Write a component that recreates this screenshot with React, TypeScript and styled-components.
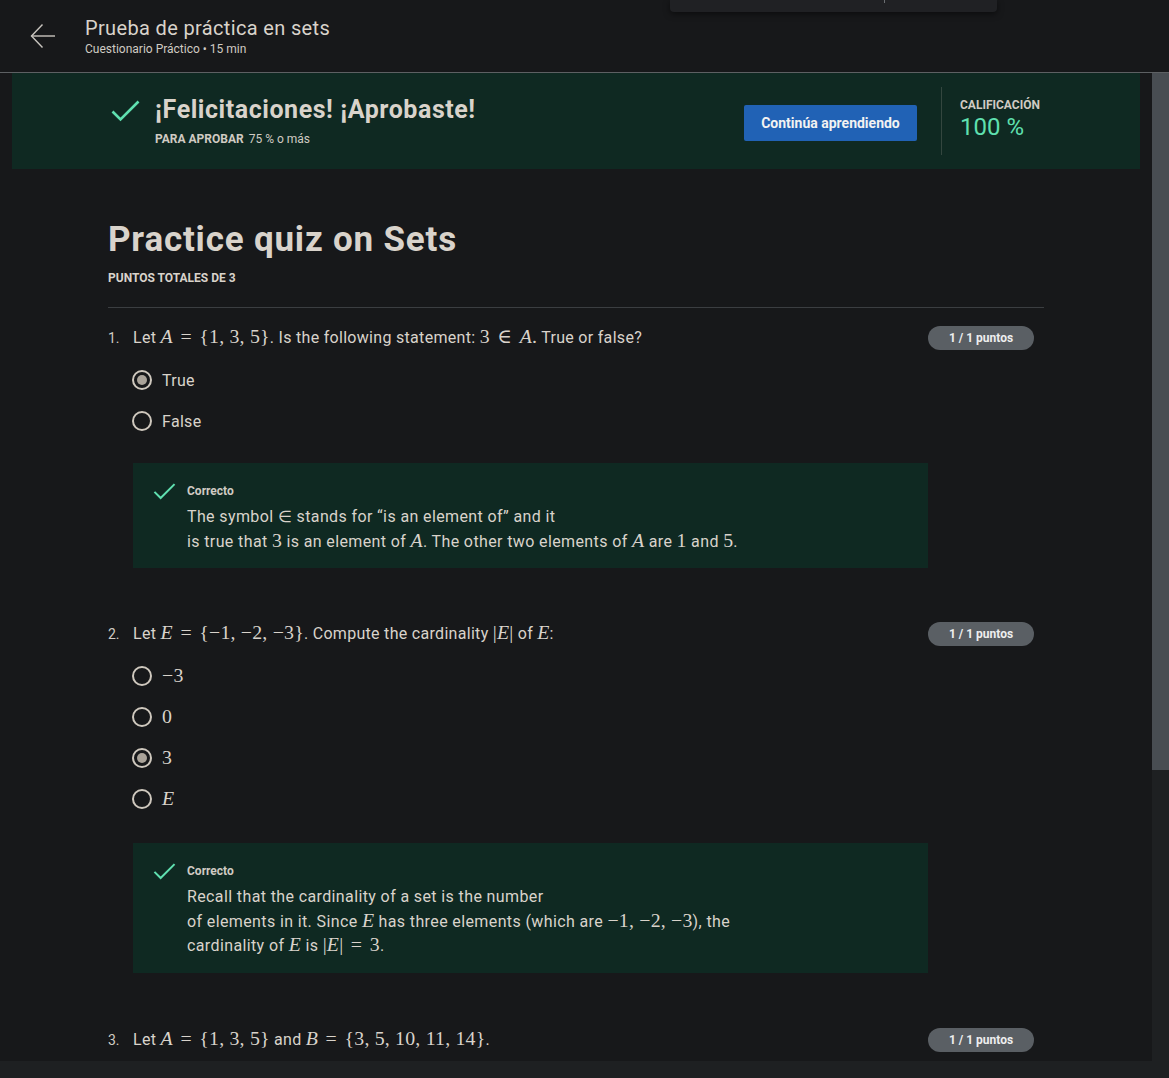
import React from "react";
import styled, { createGlobalStyle } from "styled-components";

const GlobalStyle = createGlobalStyle`
  html, body {
    margin: 0;
    padding: 0;
    background: #17181a;
    overflow: hidden;
  }
  * {
    box-sizing: border-box;
  }
`;

const TEXT = "#d9d3cb";
const GREEN = "#5fe0b0";
const DARK_GREEN = "#0f2922";

const Page = styled.div`
  position: relative;
  width: 1169px;
  height: 1078px;
  display: grid;
  grid-template-rows: 73px 1fr 17px;
  background: #17181a;
  color: ${TEXT};
  font-family: Roboto, Lato, sans-serif;
`;

// header
const Header = styled.header`
  display: flex;
  align-items: center;
  gap: 29px;
  padding-left: 30px;
  border-bottom: 1px solid #5d6063;
  background: #17181a;
`;

const BackButton = styled.button`
  display: flex;
  align-items: center;
  justify-content: center;
  width: 26px;
  height: 26px;
  padding: 0;
  border: none;
  background: transparent;
  color: #c9c5bf;
  cursor: pointer;
`;

const HeaderText = styled.div`
  display: flex;
  flex-direction: column;
`;

const HeaderTitle = styled.h1`
  margin: 0;
  font-size: 20px;
  line-height: 26px;
  font-weight: 400;
  letter-spacing: 0.35px;
  color: ${TEXT};
`;

const HeaderSub = styled.div`
  font-size: 12px;
  line-height: 16px;
  color: #d0cbc3;
`;

const TopMenu = styled.div`
  position: absolute;
  top: 0;
  left: 670px;
  width: 327px;
  height: 12px;
  background: #202124;
  border-radius: 0 0 4px 4px;
  box-shadow: 0 2px 6px rgba(0, 0, 0, 0.5);
  display: flex;
  padding-left: 214px;
`;

const MenuTick = styled.span`
  width: 1px;
  height: 3px;
  background: #6b6e72;
`;

// body and fake scrollbars
const Body = styled.div`
  display: grid;
  grid-template-columns: 1fr 17px;
  overflow: hidden;
`;

const ScrollArea = styled.main`
  overflow: hidden;
`;

const VTrack = styled.div`
  display: flex;
  flex-direction: column;
  background: #1e2022;
`;

const VThumb = styled.div`
  height: 697px;
  background: #484d52;
`;

const HTrack = styled.div`
  background: #1e2022;
`;

// banner
const Banner = styled.section`
  margin: 0 12px;
  height: 96px;
  background: ${DARK_GREEN};
  display: flex;
  align-items: center;
  padding: 0 96px 0 99px;
`;

const BannerLeft = styled.div`
  flex: 1;
  display: flex;
  align-items: flex-start;
  gap: 15px;
`;

const CheckWrap = styled.div`
  padding-top: 5px;
`;

const BannerTitle = styled.h2`
  margin: 0;
  font-size: 25px;
  line-height: 30px;
  font-weight: 700;
  letter-spacing: 0.55px;
  color: ${TEXT};
`;

const PassLine = styled.div`
  margin-top: 6px;
  font-size: 12px;
  line-height: 16px;
  color: #d0cbc3;
  b {
    font-weight: 700;
    margin-right: 5px;
  }
`;

const PrimaryButton = styled.button`
  width: 173px;
  height: 36px;
  margin-top: 4px;
  border: none;
  border-radius: 2px;
  background: #2162b5;
  color: #f2f2f2;
  font-family: inherit;
  font-size: 14px;
  font-weight: 700;
  cursor: pointer;
`;

const VDivider = styled.div`
  width: 1px;
  height: 68px;
  margin: 0 18px 0 24px;
  background: #34463f;
`;

const Grade = styled.div`
  width: 84px;
  display: flex;
  flex-direction: column;
  margin-top: -4px;
`;

const GradeLabel = styled.div`
  font-size: 12px;
  line-height: 16px;
  font-weight: 700;
  color: #d0cbc3;
  white-space: nowrap;
`;

const GradeValue = styled.div`
  font-size: 24px;
  line-height: 28px;
  color: ${GREEN};
`;

// quiz content
const Content = styled.div`
  margin-left: 108px;
  width: 936px;
`;

const QuizTitle = styled.h1`
  margin: 51px 0 0;
  font-size: 35px;
  line-height: 40px;
  font-weight: 700;
  letter-spacing: 0.8px;
  color: ${TEXT};
`;

const TotalPoints = styled.div`
  margin-top: 10px;
  font-size: 12px;
  line-height: 16px;
  font-weight: 700;
  color: ${TEXT};
`;

const Rule = styled.hr`
  margin: 21px 0 0;
  border: none;
  height: 1px;
  background: #3b3e41;
`;

const Question = styled.section<{ $gap: number }>`
  margin-top: ${(p) => p.$gap}px;
`;

const QuestionRow = styled.div`
  display: flex;
  align-items: center;
  height: 24px;
  padding-right: 10px;
`;

const QNumber = styled.span`
  width: 25px;
  font-size: 14px;
  color: #d0cbc3;
`;

const QText = styled.div`
  flex: 1;
  font-size: 16px;
  line-height: 24px;
  letter-spacing: 0.3px;
  white-space: nowrap;
`;

const Badge = styled.span`
  display: inline-flex;
  align-items: center;
  justify-content: center;
  width: 106px;
  height: 24px;
  border-radius: 12px;
  background: #5a5f64;
  color: #eeeeee;
  font-size: 12px;
  font-weight: 700;
`;

const Options = styled.div`
  margin: 18px 0 0 24px;
  display: flex;
  flex-direction: column;
  gap: 17px;
`;

const Option = styled.label`
  display: flex;
  align-items: center;
  gap: 10px;
  height: 24px;
  font-size: 16px;
  letter-spacing: 0.3px;
`;

const Radio = styled.span<{ $checked?: boolean }>`
  width: 20px;
  height: 20px;
  border-radius: 50%;
  border: 2px solid #cfc8be;
  display: flex;
  align-items: center;
  justify-content: center;
  &::after {
    content: "";
    width: 10px;
    height: 10px;
    border-radius: 50%;
    background: ${(p) => (p.$checked ? "#aaa399" : "transparent")};
  }
`;

const Feedback = styled.div<{ $gap: number }>`
  margin: ${(p) => p.$gap}px 0 0 25px;
  width: 795px;
  background: ${DARK_GREEN};
  display: flex;
  gap: 11px;
  padding: 20px 20px 14px;
`;

const FeedbackBody = styled.div`
  display: flex;
  flex-direction: column;
  gap: 6px;
`;

const FeedbackLabel = styled.div`
  font-size: 12px;
  line-height: 16px;
  font-weight: 700;
  color: #d0cbc3;
`;

const FeedbackText = styled.div`
  font-size: 16px;
  line-height: 24.5px;
  letter-spacing: 0.38px;
`;

// math
const M = styled.span`
  font-family: "Liberation Serif", "DejaVu Serif", serif;
  font-size: 1.24em;
  line-height: 1;
  letter-spacing: 0.2px;
  white-space: nowrap;
`;

const Rel = styled.span`
  margin: 0 0.12em;
`;

const I = styled.i`
  font-style: italic;
`;

const Check = ({ w, h }: { w: number; h: number }) => (
  <svg width={w} height={h} viewBox="0 0 29 22" fill="none">
    <polyline points="1.5,11.5 9.5,19.5 27.5,1.5" stroke={GREEN} strokeWidth="2.6" />
  </svg>
);

const Arrow = () => (
  <svg width="26" height="26" viewBox="0 0 26 26" fill="none" stroke="currentColor" strokeWidth="1.4">
    <path d="M25 13H1.5" />
    <path d="M12.5 1.5L1.5 13l11 11.5" />
  </svg>
);

const App = () => {
  return (
    <>
      <GlobalStyle />
      <Page>
        <Header>
          <BackButton aria-label="Volver">
            <Arrow />
          </BackButton>
          <HeaderText>
            <HeaderTitle>Prueba de práctica en sets</HeaderTitle>
            <HeaderSub>Cuestionario Práctico • 15 min</HeaderSub>
          </HeaderText>
        </Header>
        <TopMenu>
          <MenuTick />
        </TopMenu>

        <Body>
          <ScrollArea>
            <Banner>
              <BannerLeft>
                <CheckWrap>
                  <Check w={29} h={22} />
                </CheckWrap>
                <div>
                  <BannerTitle>¡Felicitaciones! ¡Aprobaste!</BannerTitle>
                  <PassLine>
                    <b>PARA APROBAR</b>75 % o más
                  </PassLine>
                </div>
              </BannerLeft>
              <PrimaryButton>Continúa aprendiendo</PrimaryButton>
              <VDivider />
              <Grade>
                <GradeLabel>CALIFICACIÓN</GradeLabel>
                <GradeValue>100 %</GradeValue>
              </Grade>
            </Banner>

            <Content>
              <QuizTitle>Practice quiz on Sets</QuizTitle>
              <TotalPoints>PUNTOS TOTALES DE 3</TotalPoints>
              <Rule />

              <Question $gap={18}>
                <QuestionRow>
                  <QNumber>1.</QNumber>
                  <QText>
                    Let <M><I>A</I> <Rel>=</Rel> {"{"}1, 3, 5{"}"}</M>. Is the following statement:{" "}
                    <M>3 <Rel>∈</Rel> <I>A</I>.</M> True or false?
                  </QText>
                  <Badge>1 / 1 puntos</Badge>
                </QuestionRow>
                <Options>
                  <Option>
                    <Radio $checked />
                    True
                  </Option>
                  <Option>
                    <Radio />
                    False
                  </Option>
                </Options>
                <Feedback $gap={30}>
                  <Check w={23} h={17} />
                  <FeedbackBody>
                    <FeedbackLabel>Correcto</FeedbackLabel>
                    <FeedbackText>
                      The symbol ∈ stands for “is an element of” and it
                      <br />
                      is true that <M>3</M> is an element of <M><I>A</I></M>. The other two elements of{" "}
                      <M><I>A</I></M> are <M>1</M> and <M>5</M>.
                    </FeedbackText>
                  </FeedbackBody>
                </Feedback>
              </Question>

              <Question $gap={54}>
                <QuestionRow>
                  <QNumber>2.</QNumber>
                  <QText>
                    Let <M><I>E</I> <Rel>=</Rel> {"{"}−1, −2, −3{"}"}</M>. Compute the cardinality{" "}
                    <M>|<I>E</I>|</M> of <M><I>E</I></M>:
                  </QText>
                  <Badge>1 / 1 puntos</Badge>
                </QuestionRow>
                <Options>
                  <Option>
                    <Radio />
                    <M>−3</M>
                  </Option>
                  <Option>
                    <Radio />
                    <M>0</M>
                  </Option>
                  <Option>
                    <Radio $checked />
                    <M>3</M>
                  </Option>
                  <Option>
                    <Radio />
                    <M><I>E</I></M>
                  </Option>
                </Options>
                <Feedback $gap={32}>
                  <Check w={23} h={17} />
                  <FeedbackBody>
                    <FeedbackLabel>Correcto</FeedbackLabel>
                    <FeedbackText>
                      Recall that the cardinality of a set is the number
                      <br />
                      of elements in it. Since <M><I>E</I></M> has three elements (which are{" "}
                      <M>−1, −2, −3</M>), the
                      <br />
                      cardinality of <M><I>E</I></M> is <M>|<I>E</I>| <Rel>=</Rel> 3</M>.
                    </FeedbackText>
                  </FeedbackBody>
                </Feedback>
              </Question>

              <Question $gap={55}>
                <QuestionRow>
                  <QNumber>3.</QNumber>
                  <QText>
                    Let <M><I>A</I> <Rel>=</Rel> {"{"}1, 3, 5{"}"}</M> and{" "}
                    <M><I>B</I> <Rel>=</Rel> {"{"}3, 5, 10, 11, 14{"}"}</M>.
                  </QText>
                  <Badge>1 / 1 puntos</Badge>
                </QuestionRow>
              </Question>
            </Content>
          </ScrollArea>
          <VTrack>
            <VThumb />
          </VTrack>
        </Body>
        <HTrack />
      </Page>
    </>
  );
};

export default App;
